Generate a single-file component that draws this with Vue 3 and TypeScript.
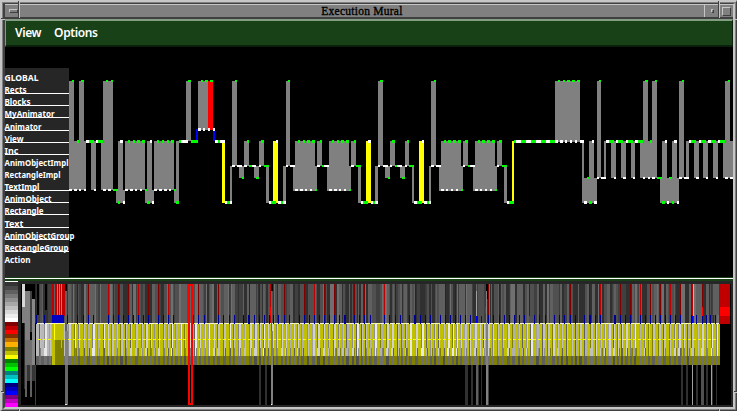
<script setup lang="ts">
interface Box { x: number; y: number; w: number; h: number; c: string }

const box = (x: number, y: number, x2: number, y2: number, c: string): Box => ({ x, y, w: x2 - x, h: y2 - y, c })
const GREY = '#808080'
const tones: Record<string, string> = { g: '#00ff00', w: '#ffffff' }

const labels = [
  { text: 'GLOBAL', line: false, w: 34 },
  { text: 'Rects', line: true, w: 22 },
  { text: 'Blocks', line: true, w: 26 },
  { text: 'MyAnimator', line: true, w: 50 },
  { text: 'Animator', line: true, w: 37 },
  { text: 'View', line: true, w: 19 },
  { text: 'Inc', line: true, w: 14 },
  { text: 'AnimObjectImpl', line: false, w: 64 },
  { text: 'RectangleImpl', line: false, w: 56 },
  { text: 'TextImpl', line: true, w: 35 },
  { text: 'AnimObject', line: true, w: 47 },
  { text: 'Rectangle', line: true, w: 39 },
  { text: 'Text', line: true, w: 19 },
  { text: 'AnimObjectGroup', line: true, w: 70 },
  { text: 'RectangleGroup', line: true, w: 64 },
  { text: 'Action', line: false, w: 26 }
]

// Call spans grouped by their vertical extent: [top, bottom, "x1-x2 ..."]
const spans: [number, number, string, string][] = [
  [81, 141, GREY, '69-74 79-84 103-113 186-191 555-580 643-648 652-657 725-730'],
  [141, 190, GREY, '69-86 91-96 101-113 118-123 125-145 147-152 154-174'],
  [190, 203, GREY, '116-125 145-154 174-179'],
  [141, 203, GREY, '176-179'],
  [81, 130, GREY, '198-208'],
  [81, 130, '#ff0000', '208-213'],
  [129, 141, '#0000ff', '196-198 213-215'],
  [141, 203, '#ffff00', '222-225 273-278 366-371 419-424 512-514'],
  [166, 203, GREY, '230-232 266-269 283-286 358-361 375-378 412-414 429-431 504-507'],
  [81, 166, GREY, '232-237 286-290 378-383 431-436'],
  [166, 178, GREY, '239-244 254-259 385-390 400-405'],
  [141, 166, GREY, '244-249 259-264 317-322 351-356 390-395 405-409 463-468 497-502'],
  [166, 191, GREY, '293-317 327-351 439-463 473-497'],
  [141, 191, GREY, '295-315 329-349 441-461 475-495'],
  [141, 142, GREY, '555-580'],
  [141, 178, GREY, '582-584 589-594 604-606 611-616 621-626 631-635 640-657 662-667 672-677 686-689 694-699 703-708 713-718 723-733'],
  [178, 203, GREY, '582-597 660-679'],
  [81, 178, GREY, '597-601 679-684']
]

const marks: [number, number, string][] = [
  [80, 2, 'g72-74 g81-84 g106-108 g111-113 g188-191 g201-203 g205-208 g210-213 g235-237 g288-290 g380-383 g434-436 g558-560 g563-565 g567-570 g572-575 g577-580 g599-601 g645-648 g655-657 g682-684 g728-730'],
  [128, 3, 'w198-201 w203-205 w208-210 w213-215'],
  [140, 3, 'g77-79 w86-89 g89-94 w96-98 g98-103 w120-123 g128-130 g133-135 g137-140 g142-145 w150-152 g157-159 g162-164 g167-169 g171-174 g179-181 w181-188 g191-198 w215-218 g218-220 w220-225 g247-249 g261-264 w276-278 g298-300 g303-305 g307-310 g312-315 g320-322 g332-334 g337-339 g341-344 g346-349 g354-356 w368-371 g392-395 g407-409 w422-424 g444-446 g448-451 g453-456 g458-461 g465-468 g478-480 g482-485 g487-490 g492-495 g499-502 g514-516 w516-521 g521-526 w526-531 g531-536 w536-541 g541-546 w546-550 g550-555 w555-558 w560-563 w565-567 w570-572 w575-577 w580-584 w592-594 w606-609 g609-614 w616-618 g618-623 w626-628 g628-633 w635-638 g638-643 g650-652 w665-667 w674-677 w689-691 g691-696 w699-701 g701-706 w708-711 g711-716 w718-720 g720-725'],
  [165, 2, 'w232-235 w237-242 w244-247 g249-252 w252-256 w259-261 g264-269 w286-288 w290-295 w317-320 g322-324 w324-329 w351-354 g356-361 w378-380 w383-388 w390-392 g395-397 w397-402 w405-407 g409-414 w431-434 w436-441 w463-465 g468-470 w470-475 w497-499 g502-507'],
  [177, 2, 'g242-244 g256-259 g388-390 g402-405 g587-589 w597-599 w601-606 w614-616 w623-626 w633-635 w643-645 w648-650 w652-655 g657-662 g669-672 w679-682 w684-689 w696-699 w706-708 w716-718 w725-728 w730-733'],
  [189, 2, 'w69-72 w74-77 w79-81 w84-86 w94-96 w103-106 w108-111 g113-118 w125-128 w130-133 w135-137 w140-142 g145-147 w154-157 w159-162 w164-167 w169-171 g174-176 w295-298 w300-303 w305-307 w310-312 g315-317 w329-332 w334-337 w339-341 w344-346 g349-351 w441-444 w446-448 w451-453 w456-458 g461-463 w475-478 w480-482 w485-487 w490-492 g495-497'],
  [201, 3, 'g118-120 w123-125 g147-150 w152-154 g176-179 w225-227 g227-230 w230-232 w269-271 g271-276 w278-281 g281-283 w283-286 w361-363 g363-368 w371-373 g373-375 w375-378 w414-417 g417-422 w424-427 g427-429 w429-431 w507-509 g509-514 w584-587 g589-592 w594-597 g662-665 w667-669 g672-674 w677-679']
]

const trace: Box[] = []
for (const [y, y2, c, list] of spans) {
  for (const s of list.split(' ')) {
    const [a, b] = s.split('-').map(Number)
    trace.push(box(a, y, b, y2, c))
  }
}
for (const [y, h, list] of marks) {
  for (const s of list.split(' ')) {
    const [a, b] = s.slice(1).split('-').map(Number)
    trace.push(box(a, y, b, y + h, tones[s[0]]))
  }
}

// Overview of the complete run
let seed = 4127
const rnd = () => {
  seed = (seed * 1103515245 + 12345) % 2147483648
  return seed / 2147483648
}
const pick = (a: string[]) => a[Math.floor(rnd() * a.length)]

const mural: Box[] = []
for (let x = 35; x < 719;) {
  const w = 1 + Math.floor(rnd() * 2.4)
  const c = pick(['#303030', '#404040', '#505050', '#505050', '#606060', '#606060', '#707070', '#303030'])
  mural.push(box(x, 284, Math.min(x + w, 719), 323, c))
  x += w
}
for (let x = 36; x < 720;) {
  const early = x < 52
  const w = 2 + Math.floor(rnd() * 1.7)
  mural.push(box(x, 324, Math.min(x + w, 720), 356, early ? '#b8b8b8' : '#c0c000'))
  mural.push(box(x, 356, Math.min(x + w, 720), 365, early ? '#606060' : '#808000'))
  if (!early && rnd() < 0.25) mural.push(box(x, 348, x + 1, 356, '#808000'))
  x += w
  const v = 2 + Math.floor(rnd() * 1.6)
  const end = Math.min(x + v, 720)
  if (x < 720) {
    mural.push(box(x, 324, end, 356, pick(['#d0d0d0', '#d0d0d0', '#c0c0c0', '#e8e8e8', '#c0c0c0', '#b0b0b0'])))
    mural.push(box(x, 324, x + 1, rnd() < 0.4 ? 348 : 356, pick(['#808000', '#909090', '#808080', '#a0a0a0', '#606060'])))
    if (rnd() < 0.6) mural.push(box(end - 1, 348, end, 356, pick(['#606060', '#808080', '#909090'])))
    mural.push(box(x, 356, end, 365, pick(['#606060', '#606060', '#707070', '#505050'])))
  }
  x = end
}
mural.push(box(36, 323, 720, 324, '#f0f0f0'))
for (let x = 38; x < 718; x += 5) {
  mural.push(box(x, 323, x + 2, 324, '#ffff60'))
  mural.push(box(x, 339, x + 3, 340, '#ffff00'))
}

const redTicks = [35, 67, 77, 88, 108, 118, 128, 138, 148, 158, 168, 198, 218, 229, 249, 259, 273, 284, 304, 314, 324, 334, 345, 354, 364, 384, 395, 415, 425, 445, 455, 465, 488, 499, 509, 529, 539, 559, 570, 589, 600, 620, 630, 640, 650, 660, 670, 680, 702]
redTicks.forEach((x, i) => mural.push(box(x, 284, x + 1, 316, i % 3 === 1 ? '#c00000' : '#800000')))
for (const x of [36, 44, 67, 77, 83, 88, 93, 108, 113, 118, 123, 128, 133, 138, 143, 148, 158, 163, 168, 173, 193, 198, 204, 218, 223, 229, 234, 243, 248, 249, 254, 259, 264, 269, 273, 278, 284, 289, 299, 304, 309, 314, 319, 324, 329, 334, 339, 344, 345, 354, 359, 364, 370, 384, 389, 395, 400, 409, 414, 415, 420, 425, 430, 440, 445, 450, 455, 460, 465, 470, 488, 493, 499, 504, 509, 514, 519, 524, 534, 539, 545, 554, 559, 564, 570, 575, 584, 589, 590, 595, 600, 614, 615, 620, 625, 630, 640, 645, 650, 655, 660, 665, 670, 675, 680, 691, 696, 702, 706, 710, 715]) {
  mural.push(box(x, 315, x + 1, 324, '#000090'))
}

mural.push(
  // start-up phase
  box(22, 284, 25, 307, '#d8d8d8'), box(22, 307, 25, 323, '#808080'), box(24, 323, 25, 389, '#303030'),
  box(25, 291, 30, 340, '#808080'), box(25, 340, 35, 365, '#707070'), box(30, 291, 32, 332, '#404040'),
  box(32, 299, 35, 365, '#888888'), box(27, 365, 35, 381, '#353535'), box(25, 365, 27, 397, '#606060'),
  box(30, 365, 32, 397, '#606060'), box(35, 365, 36, 405, '#404040'), box(25, 284, 35, 291, '#000000'),
  box(37, 284, 39, 315, '#000000'), box(45, 284, 47, 310, '#000000'),
  // dense block
  box(52, 284, 65, 316, '#c00000'), box(54, 284, 55, 315, '#606060'), box(57, 284, 58, 315, '#909090'),
  box(59, 284, 60, 315, '#b08080'), box(61, 284, 62, 315, '#909090'), box(52, 315, 64, 323, '#0000c0'),
  box(52, 324, 64, 340, '#c0c000'), box(52, 340, 64, 365, '#808000'), box(52, 340, 55, 365, '#c0c000'),
  box(54, 324, 55, 340, '#ffff00'), box(61, 340, 62, 348, '#c0c000'),
  box(65, 284, 67, 291, '#000000'), box(65, 291, 67, 331, '#606060'), box(65, 331, 68, 365, '#808080'),
  box(65, 365, 68, 405, '#686868'), box(65, 404, 67, 405, '#e0e0e0'),
  // middle bursts
  box(259, 365, 261, 405, '#303030'), box(265, 365, 267, 405, '#303030'),
  box(270, 284, 271, 323, '#c00000'), box(270, 307, 271, 316, '#ff0000'), box(271, 284, 273, 291, '#000000'),
  box(271, 291, 272, 331, '#606060'), box(271, 331, 273, 405, '#808080'), box(271, 404, 272, 405, '#ffffff'),
  box(465, 365, 468, 405, '#303030'), box(471, 365, 473, 405, '#303030'), box(476, 365, 478, 405, '#606060'),
  box(478, 365, 479, 405, '#303030'), box(481, 365, 482, 405, '#303030'), box(476, 291, 477, 316, '#a0a0a0'),
  box(477, 284, 478, 316, '#d00000'), box(476, 316, 478, 323, '#0000ff'), box(481, 316, 482, 323, '#0000ff'),
  box(485, 284, 486, 323, '#d00000'), box(485, 307, 486, 313, '#ff0000'), box(486, 284, 488, 299, '#000000'),
  box(486, 291, 487, 331, '#808080'), box(486, 331, 488, 405, '#808080'), box(488, 365, 489, 405, '#404040'),
  // closing phase
  box(681, 365, 683, 405, '#303030'), box(686, 365, 688, 405, '#303030'), box(692, 365, 693, 405, '#a0a0a0'),
  box(696, 365, 698, 405, '#303030'), box(701, 365, 704, 405, '#505050'), box(706, 365, 708, 405, '#303030'),
  box(711, 365, 712, 405, '#a0a0a0'), box(712, 365, 713, 405, '#303030'), box(716, 365, 717, 405, '#303030'),
  box(692, 284, 693, 316, '#c00000'), box(693, 284, 694, 316, '#c0c0c0'), box(702, 307, 703, 316, '#ff0000'),
  box(711, 284, 712, 316, '#c00000'), box(713, 284, 719, 315, '#606060'), box(692, 316, 693, 323, '#0000ff'),
  box(719, 284, 730, 324, '#c00000'), box(720, 307, 730, 316, '#ff0000')
)

const scale = [
  '#333333', '#484848', '#606060', '#787878', '#909090', '#a8a8a8', '#c0c0c0', '#d8d8d8', '#ececec', '#ffffff',
  '#800000', '#c00000', '#ff0000', '#803000', '#c07000', '#ffb000', '#808000', '#c0c000', '#ffff00',
  '#008000', '#00c000', '#00ff00', '#008080', '#00c0c0', '#00ffff', '#000080', '#0000c0', '#0000ff',
  '#800080', '#c000c0', '#ff00ff'
]
</script>

<template>
  <div class="window">
    <div class="frame">
      <header class="title">
        <div class="tb left"><i class="dash"></i></div>
        <h1>Execution Mural</h1>
        <div class="tb mid"><i class="dot"></i></div>
        <div class="tb right"><i class="sq"></i></div>
      </header>
      <nav class="menu"><span>View</span><span class="opt">Options</span></nav>
      <main class="trace">
        <ul class="labels">
          <li v-for="l in labels" :key="l.text" :class="{ ruled: l.line }">
            <svg width="64" height="12">
              <text x="-0.5" y="9" :textLength="l.w" lengthAdjust="spacingAndGlyphs">{{ l.text }}</text>
            </svg>
          </li>
        </ul>
        <svg class="plot" viewBox="69 68 664 209" width="664" height="209" shape-rendering="crispEdges">
          <rect v-for="(r, i) in trace" :key="i" :x="r.x" :y="r.y" :width="r.w" :height="r.h" :fill="r.c" />
        </svg>
      </main>
      <div class="sash"></div>
      <section class="overview">
        <div class="scale">
          <i v-for="c in scale" :key="c" :style="{ background: c }"></i>
        </div>
        <svg class="mural" viewBox="21 284 710 121" width="710" height="121" shape-rendering="crispEdges">
          <rect x="21" y="284" width="710" height="121" fill="#000" />
          <rect v-for="(r, i) in mural" :key="i" :x="r.x" :y="r.y" :width="r.w" :height="r.h" :fill="r.c" />
          <rect x="189" y="285" width="3" height="119" fill="none" stroke="#f00" stroke-width="2" />
        </svg>
      </section>
    </div>
    <svg class="notches" viewBox="0 0 737 411" width="737" height="411" shape-rendering="crispEdges">
      <path d="M18.5 1V18M1 18.5H4M1 391.5H4M718.5 1V18M18.5 409V411M718.5 409V411M734 391.5H737" stroke="#404040" />
      <path d="M19.5 1V18M1 19.5H5M1 392.5H4M719.5 1V18M19.5 409V411M719.5 409V411M734 392.5H737M734 19.5H737" stroke="#c6c6c6" />
    </svg>
  </div>
</template>

<style>
body { margin: 0; background: #000; overflow: hidden; }
</style>

<style scoped>
.window {
  position: relative;
  box-sizing: border-box;
  width: 737px;
  height: 411px;
  background: #808080;
  border: solid;
  border-width: 2px 1px 1px 2px;
  border-color: #c6c6c6 #404040 #404040 #c6c6c6;
  padding: 1px;
}
.frame {
  box-sizing: border-box;
  height: 406px;
  width: 732px;
  border: solid;
  border-width: 1px 2px 2px 2px;
  border-color: #404040 #c6c6c6 #c6c6c6 #404040;
  display: flex;
  flex-direction: column;
  background: #000;
}
.title {
  box-sizing: border-box;
  height: 15px;
  flex: none;
  display: flex;
  background: #808080;
  border-top: 1px solid #c6c6c6;
  border-bottom: 2px solid #404040;
}
h1 {
  flex: 1;
  margin: 0;
  padding-left: 0;
  font: 11.5px/13px "Liberation Serif", serif;
  -webkit-text-stroke: 0.35px #000;
  letter-spacing: 0.25px;
  text-align: center;
  color: #000;
}
.tb { display: flex; align-items: center; justify-content: center; width: 13px; }
.tb.left { padding-left: 2px; }
.tb.mid { width: 15px; border-left: 1px solid #c6c6c6; }
.tb i { box-sizing: border-box; border: 1px solid; border-color: #c6c6c6 #404040 #404040 #c6c6c6; }
.dash { width: 9px; height: 4px; }
.dot { width: 3px; height: 4px; }
.sq { width: 9px; height: 9px; }
.menu {
  box-sizing: border-box;
  height: 28px;
  flex: none;
  display: flex;
  padding-left: 9px;
  background: #184118;
  border: solid;
  border-width: 2px 1px 2px 1px;
  border-color: #849c84 #0a200a #0a200a #849c84;
  font: 600 12px/24px "Noto Sans", sans-serif;
  letter-spacing: -0.4px;
  color: #fff;
}
.menu .opt { margin-left: 13px; }
.trace { display: flex; height: 209px; padding-top: 21px; flex: none; }
.labels {
  box-sizing: border-box;
  margin: 0;
  padding: 4px 0 0;
  list-style: none;
  width: 64px;
  background: #262626;
}
li { position: relative; box-sizing: border-box; height: 12.13px; }
li svg { display: block; overflow: visible; }
li.ruled { background: linear-gradient(#fff, #fff) 0 9px / 100% 1px no-repeat; }
li text { font: bold 9px "Noto Sans", sans-serif; fill: #fff; }
.plot { flex: none; display: block; }
.sash {
  height: 1px;
  flex: none;
  background: #fff;
  border-top: 1px solid #184118;
  border-bottom: 2px solid #184118;
}
.overview { display: flex; flex: 1; background: #262626; }
.scale {
  display: flex;
  flex-direction: column;
  width: 13px;
  height: 125px;
  border-top: 1px solid #fff;
  margin-right: 3px;
}
.scale i { flex: 1; }
.mural { display: block; margin-top: 3px; }
.notches { position: absolute; left: -2px; top: -2px; pointer-events: none; }
</style>
